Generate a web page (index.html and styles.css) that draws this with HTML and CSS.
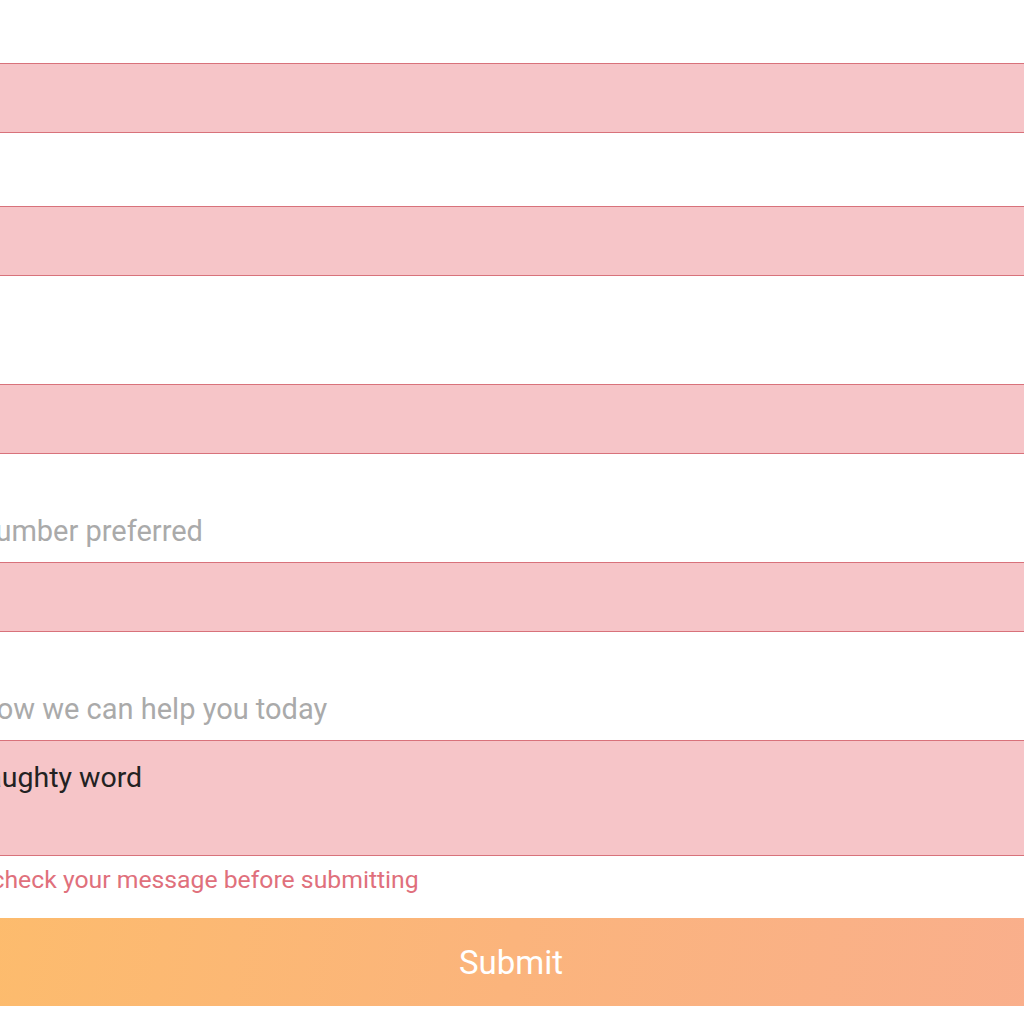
FILE: index.html
```html
<!DOCTYPE html>
<html lang="en">
<head>
<meta charset="utf-8">
<title>Contact form</title>
<link rel="stylesheet" href="styles.css">
</head>
<body>
<form class="form">
  <div class="group">
    <label class="label">Name</label>
    <div class="input"></div>
    <div class="input input-second"></div>
  </div>
  <div class="group">
    <label class="label">Email</label>
    <div class="input"></div>
  </div>
  <div class="group">
    <label class="label">Phone number preferred</label>
    <div class="input"></div>
  </div>
  <div class="group group-last">
    <label class="label">Tell us how we can help you today</label>
    <div class="input textarea">One naughty word</div>
    <p class="error">Please recheck your message before submitting</p>
  </div>
  <button type="button" class="submit">Submit</button>
</form>
</body>
</html>
```

FILE: styles.css
```css
html, body {
  margin: 0;
  padding: 0;
  background: #ffffff;
  overflow: hidden;
}
body {
  width: 1024px;
  height: 1024px;
  font-family: Roboto, "Liberation Sans", sans-serif;
}
.form {
  width: 1242px;
  margin-left: -110px;
  padding-top: 15px;
  display: flex;
  flex-direction: column;
}
.group {
  display: flex;
  flex-direction: column;
  margin-bottom: 60px;
}
.group-last {
  margin-bottom: 0;
}
.label {
  display: block;
  font-size: 29px;
  line-height: 35px;
  height: 35px;
  color: #aaaaaa;
  margin-bottom: 13px;
  white-space: nowrap;
}
.input {
  box-sizing: border-box;
  height: 70px;
  background: #f6c5c8;
  border: 1px solid #d8727b;
}
.input-second {
  margin-top: 73px;
}
.textarea {
  height: 116px;
  padding: 19px 22px;
  font-size: 28.5px;
  line-height: 35px;
  color: #222222;
  white-space: nowrap;
}
.error {
  margin: 10px 0 24px;
  font-size: 24.75px;
  line-height: 28px;
  height: 28px;
  color: #e0707c;
  white-space: nowrap;
}
.submit {
  box-sizing: border-box;
  height: 88px;
  border: none;
  background: linear-gradient(100deg, #fdbd6a 0%, #fbb47c 50%, #f9ae8f 100%);
  color: #ffffff;
  font-family: Roboto, "Liberation Sans", sans-serif;
  font-size: 33px;
  padding: 0;
}
```
